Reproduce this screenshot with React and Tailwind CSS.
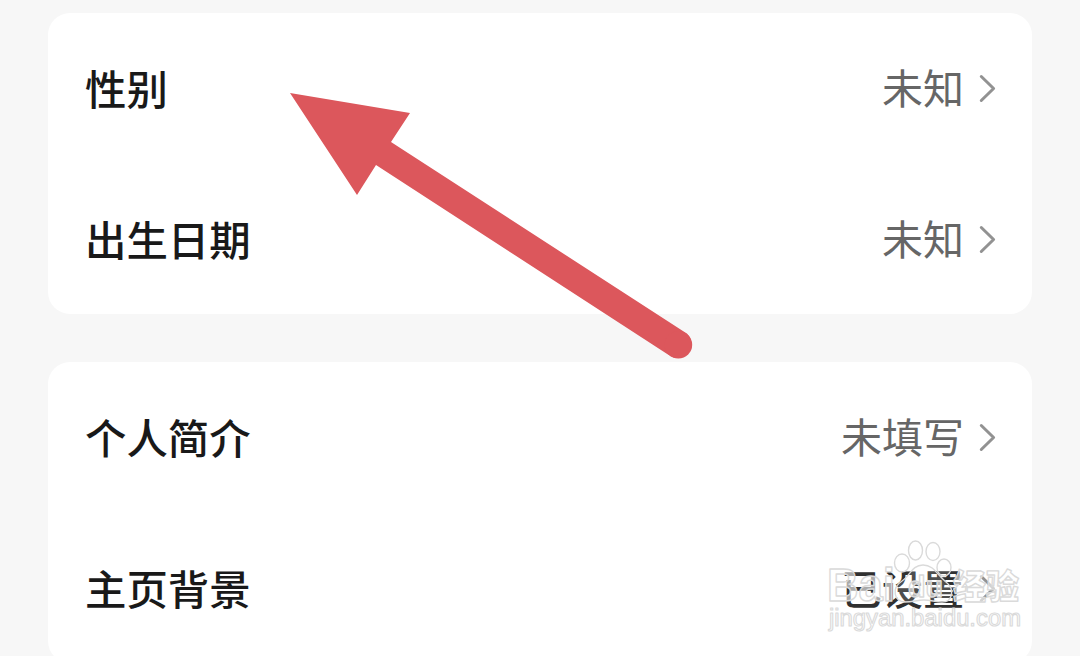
const cards = [
  [['性别', '未知'], ['出生日期', '未知']],
  [['个人简介', '未填写'], ['主页背景', '已设置', true]],
];

function Row({ label, value, dark }) {
  return (
    <div className="flex h-[151px] items-center justify-between pl-[37px] pr-[34px]">
      <span className="pb-[2px] text-[41.4px] font-medium leading-none text-[#191919]">{label}</span>
      <div className="flex items-center gap-[14px]">
        <span className={dark ? 'pb-[2px] text-[41px] font-medium leading-none text-[#303030]' : 'pb-[4px] text-[41px] leading-none text-[#666]'}>{value}</span>
        <svg className="h-[30px] w-[20px]" viewBox="0 0 20 30" fill="none" stroke="#929292" strokeWidth="3" strokeLinecap="round" strokeLinejoin="round">
          <path d="M3.3 2.5 L15.6 14.5 L3.3 26.5" />
        </svg>
      </div>
    </div>
  );
}

function Watermark() {
  return (
    <g fill="#fff" fillOpacity=".6" stroke="#dadada" strokeWidth="1.4" strokeLinejoin="round" fontFamily="Liberation Sans, Noto Sans CJK SC, sans-serif">
      <g fillOpacity=".15">
        <ellipse cx="902" cy="563" rx="7.5" ry="9" />
        <ellipse cx="915.5" cy="550.5" rx="7" ry="9.5" />
        <ellipse cx="933" cy="551.5" rx="7" ry="9" />
        <ellipse cx="944" cy="567.5" rx="7" ry="8.5" />
        <path d="M923 565 C912 565 910 576 902 581 C891 588 894 602 905 602 C913 602 917 600 924 600 C931 600 935 602 942 602 C953 602 955 589 946 582 C937 575 934 565 923 565 Z" />
      </g>
      <text x="827" y="601" fontSize="46" fontWeight="700" textLength="68" lengthAdjust="spacingAndGlyphs">Bai</text>
      <text x="908" y="597" fontSize="29" fontWeight="700" textLength="35" lengthAdjust="spacingAndGlyphs">du</text>
      <text x="953" y="598.5" fontSize="34.5" fontWeight="900" textLength="66" lengthAdjust="spacingAndGlyphs" fontFamily="Noto Sans CJK SC, sans-serif">经验</text>
      <text x="829" y="626" fontSize="23" fillOpacity="1" strokeWidth="1.1" textLength="192" lengthAdjust="spacingAndGlyphs">jingyan.baidu.com</text>
    </g>
  );
}

export default function App() {
  return (
    <div className="relative flex h-[656px] w-[1080px] flex-col gap-12 overflow-hidden bg-[#f7f7f7] px-12 pt-[13px] font-['Noto_Sans_CJK_SC',sans-serif]">
      {cards.map((rows, i) => (
        <div key={i} className="h-[301px] shrink-0 rounded-[22px] bg-white">
          {rows.map(([label, value, dark]) => <Row key={label} label={label} value={value} dark={dark} />)}
        </div>
      ))}
      <svg className="absolute left-0 top-0" width="1080" height="656" viewBox="0 0 1080 656">
        <path d="M290 93 L410 113 L391 142 L686 333 A14 14 0 0 1 671 356.5 L376 165 L357 195 Z" fill="#dc575c" />
        <circle cx="678.4" cy="344.7" r="13.8" fill="#dc575c" />
        <Watermark />
      </svg>
    </div>
  );
}
